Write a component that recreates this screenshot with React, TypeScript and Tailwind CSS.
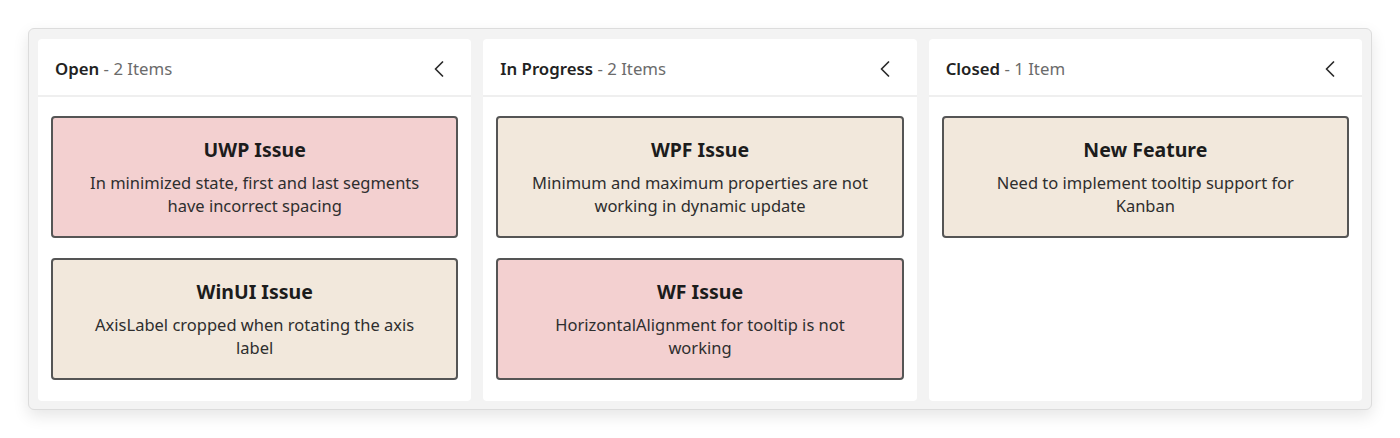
import React from "react";

type Card = { title: string; body: string; tone: "pink" | "beige" };
type Column = { name: string; count: string; cards: Card[] };

const COLUMNS: Column[] = [
  {
    name: "Open",
    count: "2 Items",
    cards: [
      { title: "UWP Issue", body: "In minimized state, first and last segments have incorrect spacing", tone: "pink" },
      { title: "WinUI Issue", body: "AxisLabel cropped when rotating the axis label", tone: "beige" },
    ],
  },
  {
    name: "In Progress",
    count: "2 Items",
    cards: [
      { title: "WPF Issue", body: "Minimum and maximum properties are not working in dynamic update", tone: "beige" },
      { title: "WF Issue", body: "HorizontalAlignment for tooltip is not working", tone: "pink" },
    ],
  },
  {
    name: "Closed",
    count: "1 Item",
    cards: [{ title: "New Feature", body: "Need to implement tooltip support for Kanban", tone: "beige" }],
  },
];

function Chevron() {
  return (
    <svg width="12" height="16" viewBox="0 0 12 16" fill="none" aria-hidden>
      <path d="M9.5 1 L2.5 8 L9.5 15" stroke="#2b2b2b" strokeWidth="1.7" strokeLinecap="round" strokeLinejoin="round" />
    </svg>
  );
}

function KanbanCard({ card }: { card: Card }) {
  return (
    <div
      className={`h-[122px] rounded-[4px] border-2 border-[#555555] flex flex-col items-center pt-[18px] px-[29px] text-center ${
        card.tone === "pink" ? "bg-[#f3d0d0]" : "bg-[#f2e8dc]"
      }`}
    >
      <div className="text-[19.5px] font-bold leading-[28px] text-[#1c1c1c]">{card.title}</div>
      <div className="mt-[7px] text-[16.5px] leading-[23px] text-[#2e2e2e]">{card.body}</div>
    </div>
  );
}

export default function App() {
  return (
    <div className="w-[1400px] h-[438px] bg-white p-[28px] font-['Noto_Sans',sans-serif]">
      <div className="h-[382px] rounded-[6px] border border-[#dcdcdc] bg-[#f3f3f3] shadow-[0_6px_16px_rgba(0,0,0,0.10)] px-[9px] pt-[10px] pb-[8px] grid grid-cols-3 gap-[12px]">
        {COLUMNS.map((col) => (
          <div key={col.name} className="bg-white rounded-[4px] flex flex-col">
            <div className="h-[58px] flex items-center justify-between pt-[3px] pl-[17px] pr-[26px] border-b-2 border-[#efefef]">
              <div className="text-[16.8px] text-[#6b6b6b]">
                <span className="font-semibold text-[#222222]">{col.name}</span> - {col.count}
              </div>
              <Chevron />
            </div>
            <div className="flex flex-col gap-[20px] px-[13px] pt-[19px]">
              {col.cards.map((c) => (
                <KanbanCard key={c.title} card={c} />
              ))}
            </div>
          </div>
        ))}
      </div>
    </div>
  );
}
